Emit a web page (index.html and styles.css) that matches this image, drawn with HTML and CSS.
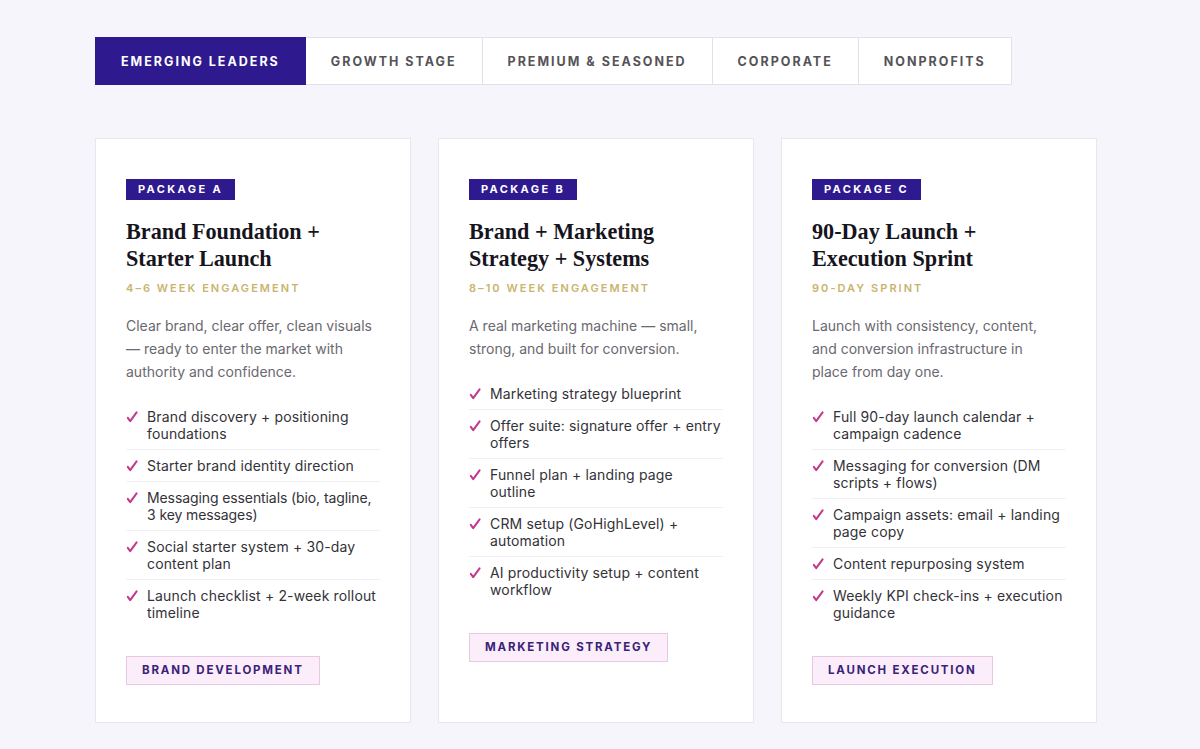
FILE: index.html
```html
<!DOCTYPE html>
<html lang="en">
<head>
<meta charset="utf-8">
<title>Packages</title>
<link rel="stylesheet" href="styles.css">
</head>
<body>
<div class="page">
  <nav class="tabs">
    <button class="tab active">EMERGING LEADERS</button>
    <button class="tab">GROWTH STAGE</button>
    <button class="tab">PREMIUM &amp; SEASONED</button>
    <button class="tab">CORPORATE</button>
    <button class="tab">NONPROFITS</button>
  </nav>

  <section class="cards">
    <article class="card">
      <span class="badge">PACKAGE A</span>
      <h2 class="title">Brand Foundation +<br>Starter Launch</h2>
      <p class="term">4–6 WEEK ENGAGEMENT</p>
      <p class="desc">Clear brand, clear offer, clean visuals — ready to enter the market with authority and confidence.</p>
      <ul class="list">
        <li><svg class="chk" viewBox="0 0 12 12"><path d="M1.8 6.8 L4.2 10.2 L10.6 1.4"/></svg><span>Brand discovery + positioning foundations</span></li>
        <li><svg class="chk" viewBox="0 0 12 12"><path d="M1.8 6.8 L4.2 10.2 L10.6 1.4"/></svg><span>Starter brand identity direction</span></li>
        <li><svg class="chk" viewBox="0 0 12 12"><path d="M1.8 6.8 L4.2 10.2 L10.6 1.4"/></svg><span class="tight">Messaging essentials (bio, tagline, 3 key messages)</span></li>
        <li><svg class="chk" viewBox="0 0 12 12"><path d="M1.8 6.8 L4.2 10.2 L10.6 1.4"/></svg><span>Social starter system + 30-day content plan</span></li>
        <li><svg class="chk" viewBox="0 0 12 12"><path d="M1.8 6.8 L4.2 10.2 L10.6 1.4"/></svg><span>Launch checklist + 2-week rollout timeline</span></li>
      </ul>
      <span class="tag">BRAND DEVELOPMENT</span>
    </article>

    <article class="card">
      <span class="badge">PACKAGE B</span>
      <h2 class="title">Brand + Marketing<br>Strategy + Systems</h2>
      <p class="term">8–10 WEEK ENGAGEMENT</p>
      <p class="desc">A real marketing machine — small, strong, and built for conversion.</p>
      <ul class="list">
        <li><svg class="chk" viewBox="0 0 12 12"><path d="M1.8 6.8 L4.2 10.2 L10.6 1.4"/></svg><span>Marketing strategy blueprint</span></li>
        <li><svg class="chk" viewBox="0 0 12 12"><path d="M1.8 6.8 L4.2 10.2 L10.6 1.4"/></svg><span>Offer suite: signature offer + entry offers</span></li>
        <li><svg class="chk" viewBox="0 0 12 12"><path d="M1.8 6.8 L4.2 10.2 L10.6 1.4"/></svg><span>Funnel plan + landing page<br>outline</span></li>
        <li><svg class="chk" viewBox="0 0 12 12"><path d="M1.8 6.8 L4.2 10.2 L10.6 1.4"/></svg><span>CRM setup (GoHighLevel) + automation</span></li>
        <li><svg class="chk" viewBox="0 0 12 12"><path d="M1.8 6.8 L4.2 10.2 L10.6 1.4"/></svg><span>AI productivity setup + content workflow</span></li>
      </ul>
      <span class="tag">MARKETING STRATEGY</span>
    </article>

    <article class="card">
      <span class="badge">PACKAGE C</span>
      <h2 class="title">90-Day Launch +<br>Execution Sprint</h2>
      <p class="term">90-DAY SPRINT</p>
      <p class="desc">Launch with consistency, content,<br>and conversion infrastructure in<br>place from day one.</p>
      <ul class="list">
        <li><svg class="chk" viewBox="0 0 12 12"><path d="M1.8 6.8 L4.2 10.2 L10.6 1.4"/></svg><span>Full 90-day launch calendar + campaign cadence</span></li>
        <li><svg class="chk" viewBox="0 0 12 12"><path d="M1.8 6.8 L4.2 10.2 L10.6 1.4"/></svg><span>Messaging for conversion (DM scripts + flows)</span></li>
        <li><svg class="chk" viewBox="0 0 12 12"><path d="M1.8 6.8 L4.2 10.2 L10.6 1.4"/></svg><span>Campaign assets: email + landing page copy</span></li>
        <li><svg class="chk" viewBox="0 0 12 12"><path d="M1.8 6.8 L4.2 10.2 L10.6 1.4"/></svg><span>Content repurposing system</span></li>
        <li><svg class="chk" viewBox="0 0 12 12"><path d="M1.8 6.8 L4.2 10.2 L10.6 1.4"/></svg><span>Weekly KPI check-ins + execution guidance</span></li>
      </ul>
      <span class="tag">LAUNCH EXECUTION</span>
    </article>
  </section>
</div>
</body>
</html>
```

FILE: styles.css
```css
* { box-sizing: border-box; }
html, body { margin: 0; padding: 0; }
body {
  background: #f7f5fc;
  font-family: "Inter", "Noto Sans", sans-serif;
  color: #333;
}
.page {
  padding: 37px 95px 0 95px;
}
.tabs {
  display: flex;
  width: max-content;
}
.tab {
  font-family: "Inter", "Noto Sans", sans-serif;
  font-weight: 700;
  font-size: 12.5px;
  letter-spacing: 2px;
  color: #555358;
  background: #fff;
  border: 1px solid #e3e0ea;
  border-left: none;
  height: 48px;
  padding: 0 25px;
  cursor: pointer;
}
.tab:first-child { border-left: 1px solid #e3e0ea; }
.tab.active {
  background: #2e1a8e;
  border-color: #2e1a8e;
  color: #fff;
}
.cards {
  margin-top: 53px;
  display: grid;
  grid-template-columns: repeat(3, 316px);
  column-gap: 27px;
  align-items: stretch;
}
.card {
  background: #fff;
  border: 1px solid #e9e6f0;
  padding: 40px 30px 37px 30px;
  display: flex;
  flex-direction: column;
  align-items: flex-start;
}
.badge {
  display: inline-block;
  background: #2e1a8e;
  color: #fff;
  font-weight: 700;
  font-size: 11px;
  letter-spacing: 2.4px;
  height: 21px;
  line-height: 21px;
  padding: 0 12px;
}
.title {
  margin: 18px 0 0 0;
  font-family: "Liberation Serif", "Times New Roman", serif;
  font-weight: 700;
  font-size: 22.2px;
  line-height: 27px;
  color: #16141c;
}
.term {
  margin: 9px 0 0 0;
  font-weight: 600;
  font-size: 11px;
  letter-spacing: 2.05px;
  line-height: 14px;
  color: #c9b46e;
}
.desc {
  margin: 19px 0 0 0;
  font-size: 14px;
  line-height: 23px;
  color: #6a6870;
}
.list {
  list-style: none;
  margin: 18px 0 0 0;
  padding: 0;
  width: 100%;
}
.list li {
  display: flex;
  align-items: flex-start;
  gap: 9px;
  padding: 7px 0;
  border-bottom: 1px solid #f1eff5;
  font-size: 14px;
  letter-spacing: 0.15px;
  line-height: 17px;
  color: #333238;
}
.list li .tight { letter-spacing: -0.1px; }
.list li:last-child { border-bottom: none; }
.chk {
  flex: 0 0 12px;
  width: 12px;
  height: 12px;
  margin-top: 3px;
  fill: none;
  stroke: #c2388c;
  stroke-width: 2;
  stroke-linecap: round;
  stroke-linejoin: round;
}
.tag {
  margin-top: 28px;
  display: inline-block;
  background: #fcedfa;
  border: 1px solid #e8c9e3;
  color: #3a2279;
  font-weight: 700;
  font-size: 11.5px;
  letter-spacing: 1.8px;
  height: 29px;
  line-height: 27px;
  padding: 0 15px;
}
```
